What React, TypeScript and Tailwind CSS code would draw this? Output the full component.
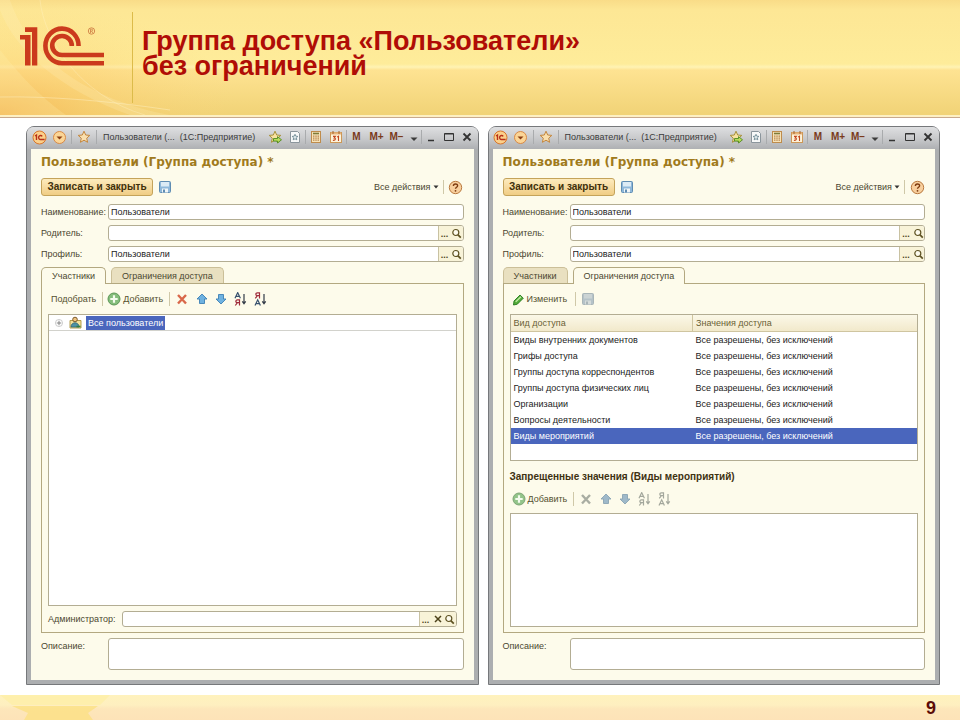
import { useId, useState, type ReactNode } from "react";

const ACCESS_KINDS = [
  "Виды внутренних документов",
  "Грифы доступа",
  "Группы доступа корреспондентов",
  "Группы доступа физических лиц",
  "Организации",
  "Вопросы деятельности",
  "Виды мероприятий",
];

type TabName = "members" | "limits";

/* ---------- icons ---------- */

function OneCBadge() {
  return (
    <svg width="15" height="15" viewBox="0 0 15 15" aria-hidden="true">
      <circle cx="7.5" cy="7.5" r="6.5" fill="#fbd08a" stroke="#d9762b" />
      <path d="M3 6l1.5-1v5M10.2 6.3a2 2 0 1 0-1.6 3.2h4" fill="none" stroke="#b8301a" strokeWidth="1.4" />
    </svg>
  );
}

function ChevronBadge() {
  return (
    <svg width="15" height="15" viewBox="0 0 15 15" aria-hidden="true">
      <circle cx="7.5" cy="7.5" r="6" fill="#fbd596" stroke="#d98a45" />
      <path d="M4.5 6.5h6l-3 3z" fill="#8a3d12" />
    </svg>
  );
}

const STAR = "M7 1.2l1.7 3.8 4.1.4-3.1 2.8.9 4.1L7 10.2l-3.6 2.1.9-4.1L1.2 5.4l4.1-.4z";

function StarIcon() {
  return (
    <svg width="14" height="14" viewBox="0 0 14 14" aria-hidden="true">
      <path d={STAR} fill="#f9dfae" stroke="#c5873d" />
    </svg>
  );
}

function StarArrowIcon() {
  return (
    <svg width="14" height="14" viewBox="0 0 14 14" aria-hidden="true">
      <path d={STAR} fill="#f8e2a0" stroke="#a8913c" />
      <path d="M5.5 8.5h4V6.6l4 3.2-4 3.2v-1.9h-4z" fill="#b9dc5c" stroke="#4e8a1f" strokeWidth=".9" />
    </svg>
  );
}

function DocStarIcon() {
  return (
    <svg width="14" height="14" viewBox="0 0 14 14" aria-hidden="true">
      <path d="M2.5 1.5h7l2 2v9h-9z" fill="#f7f8f8" stroke="#8b959c" />
      <path d="M7 4.3l.9 1.9 2 .2-1.5 1.4.4 2L7 8.8l-1.8 1 .4-2-1.5-1.4 2-.2z" fill="#dfe9ec" stroke="#63808c" strokeWidth=".8" />
    </svg>
  );
}

function CalculatorIcon() {
  return (
    <svg width="14" height="14" viewBox="0 0 14 14" aria-hidden="true">
      <rect x="2.5" y="1.5" width="9" height="11" fill="#f6e3b8" stroke="#bf8c4c" />
      <path d="M4 3.5h6" stroke="#7d7a38" strokeWidth="1.6" />
      <path d="M4.8 5.5v6M7 5.5v6M9.2 5.5v6" stroke="#a5682c" strokeWidth="1.1" strokeDasharray="1.3 .7" />
    </svg>
  );
}

function CalendarIcon() {
  return (
    <svg width="14" height="14" viewBox="0 0 14 14" aria-hidden="true">
      <rect x="1.5" y="2.5" width="11" height="10" fill="#fdf3da" stroke="#cd9858" />
      <path d="M2 3.5h10" stroke="#e8b47c" strokeWidth="2" />
      <path d="M4 1v3M10 1v3" stroke="#a4632c" />
      <path d="M4 6.4h2.4L5.2 8c1.800-.1 1.800 2.600-1.300 2.300M8.200 7l1.300-.8v4.800" fill="none" stroke="#c4471f" strokeWidth="1.1" />
    </svg>
  );
}

function SaveIcon({ muted = false }: { muted?: boolean }) {
  const edge = muted ? "#a9b5b8" : "#5f8cb2";
  const body = muted ? "#b5c2c8" : "#8fb8da";
  return (
    <svg width="14" height="14" viewBox="0 0 14 14" aria-hidden="true">
      <rect x="1.500" y="1.500" width="11" height="11" rx="1" fill={body} stroke={edge} />
      <rect x="3" y="2" width="8" height="4.500" fill={muted ? "#cbd3d4" : "#dcebf5"} />
      <rect x="4" y="8.500" width="6" height="4" fill={muted ? "#d5dbda" : "#f1f6f8"} />
      <rect x="5" y="9.500" width="2" height="3" fill={edge} />
    </svg>
  );
}

function HelpIcon() {
  return (
    <svg width="15" height="15" viewBox="0 0 15 15" aria-hidden="true">
      <circle cx="7.5" cy="7.5" r="6.2" fill="#f8cf9d" stroke="#b9793f" />
      <path d="M5.400 6c0-2.800 4.200-2.600 4.200-.3 0 1.500-2.100 1.500-2.100 3.100" fill="none" stroke="#7d3b10" strokeWidth="1.400" />
      <circle cx="7.500" cy="10.800" r=".9" fill="#7d3b10" />
    </svg>
  );
}

function MagnifierIcon() {
  return (
    <svg width="11" height="11" viewBox="0 0 11 11" aria-hidden="true">
      <circle cx="4.800" cy="4.500" r="3" fill="#fdfbee" stroke="#5e5222" strokeWidth="1.200" />
      <path d="M7 6.800l2.800 2.800" stroke="#5e5222" strokeWidth="1.700" />
    </svg>
  );
}

function PlusIcon({ muted = false }: { muted?: boolean }) {
  return (
    <svg width="14" height="14" viewBox="0 0 14 14" aria-hidden="true">
      <circle cx="7" cy="7" r="6" fill={muted ? "#93c48a" : "#84bd7b"} stroke={muted ? "#7da575" : "#5b9655"} />
      <path d="M7 3.300v7.400M3.300 7h7.400" stroke="#f4fbee" strokeWidth="2.200" />
    </svg>
  );
}

function DeleteIcon({ muted = false }: { muted?: boolean }) {
  return (
    <svg width="12" height="12" viewBox="0 0 12 12" aria-hidden="true">
      <path d="M2 2l8 8.500M10 2L2 10.500" stroke={muted ? "#a9ada2" : "#d9684a"} strokeWidth="2.400" />
    </svg>
  );
}

function ArrowIcon({ down = false, muted = false }: { down?: boolean; muted?: boolean }) {
  return (
    <svg width="12" height="12" viewBox="0 0 12 12" aria-hidden="true" className={down ? "rotate-180" : ""}>
      <path
        d="M6 1l5 5H8.500v4.500h-5V6H1z"
        fill={muted ? "#9fb9c9" : "#6fb2e0"}
        stroke={muted ? "#8aa5b4" : "#3d80b4"}
        strokeWidth=".9"
      />
    </svg>
  );
}

function SortIcon({ reverse = false, muted = false }: { reverse?: boolean; muted?: boolean }) {
  const red = muted ? "#a3a79c" : "#a02c3c";
  const blue = muted ? "#a3a79c" : "#36506e";
  return (
    <svg width="13" height="14" viewBox="0 0 13 14" aria-hidden="true">
      <g fill="none" strokeWidth="1.200">
        <path
          d={reverse ? "M1 13.500L3.700 7.800l2.700 5.700M2 11.700h3.400" : "M1 6.200L3.700.6l2.700 5.600M2 4.400h3.400"}
          stroke={blue}
        />
        <path
          d={reverse ? "M5.500 6.400V.8H3.400c-2.100 0-2.100 2.800 0 2.800h2M3.400 3.600L1.300 6.400" : "M5.500 13.500V7.900H3.400c-2.100 0-2.100 2.800 0 2.800h2M3.400 10.700l-2.100 2.800"}
          stroke={red}
        />
        <path d="M10 2v9.500M8.300 9.300l1.700 2.500 1.700-2.500" stroke={muted ? "#a3a79c" : "#333b48"} />
      </g>
    </svg>
  );
}

function PencilIcon() {
  return (
    <svg width="13" height="13" viewBox="0 0 13 13" aria-hidden="true">
      <path d="M2 8l6-6 3.300 3.200-6 6L1.500 12z" fill="#55ad3a" stroke="#24781d" strokeWidth=".9" />
      <path d="M3.700 8.900L8.900 3.800" stroke="#c9efae" strokeWidth="1.200" />
    </svg>
  );
}

function GroupIcon() {
  return (
    <svg width="13" height="13" viewBox="0 0 13 13" aria-hidden="true">
      <path d="M1 4.500h11v7.500H1z" fill="#f4e29c" stroke="#ab9340" strokeWidth=".9" />
      <circle cx="6" cy="3.500" r="2.300" fill="#eec27e" stroke="#7c5b2a" />
      <path d="M2 11c0-5.600 8-5.600 8 0z" fill="#4f93a6" stroke="#2c6474" strokeWidth=".8" />
      <path d="M7.500 10.500h4" stroke="#2f7d43" strokeWidth="1.600" />
    </svg>
  );
}

function Logo() {
  return (
    <svg width="88" height="44" viewBox="18 24 88 44" role="img" aria-label="1С">
      <g fill="#cb3a1d">
        <path d="M20 35h10.500v30.500H25V39.500h-5z" />
        <path d="M25 27.300h12.300v38.200H32V32h-7z" />
      </g>
      <g fill="none" stroke="#cb3a1d" strokeWidth="4.600">
        <path d="M78.600 46A16.600 17.300 0 1 0 62 63.200H104" />
        <path d="M71.800 46A9.800 9.500 0 1 0 62 55H104" />
      </g>
      <circle cx="91.500" cy="31" r="3.200" fill="none" stroke="#c9713a" strokeWidth=".8" />
      <path d="M90.500 33v-3.700h1.300c1.200 0 1.200 1.800 0 1.800h-1.200M91.700 31.200l1 1.800" fill="none" stroke="#c9713a" strokeWidth=".7" />
    </svg>
  );
}

function HeaderBackdrop() {
  return (
    <svg
      className="absolute inset-y-0 left-0 h-full w-[240px]"
      viewBox="0 0 240 115"
      preserveAspectRatio="none"
      aria-hidden="true"
    >
      <defs>
        <radialGradient id="glow" cx="0" cy="1" r="1">
          <stop offset="0" stopColor="#f6a63c" stopOpacity=".6" />
          <stop offset=".4" stopColor="#fbc460" stopOpacity=".4" />
          <stop offset="1" stopColor="#fbd67c" stopOpacity="0" />
        </radialGradient>
      </defs>
      <rect width="240" height="115" fill="url(#glow)" />
      <path d="M10 0C30 60 90 100 170 115H130C60 90 15 50 0 10V0z" fill="#fff3bd" opacity=".22" />
      <path d="M40 0C44 40 80 96 145 115" fill="none" stroke="#fff6cf" strokeOpacity=".3" />
      <path d="M0 50C25 82 45 100 66 115H0z" fill="#fff0b0" opacity=".22" />
      <path d="M0 97C50 96 110 101 170 110" fill="none" stroke="#fff6cf" strokeOpacity=".4" />
    </svg>
  );
}

/* ---------- small controls ---------- */

function IconButton({ label, className, children }: { label: string; className: string; children: ReactNode }) {
  return (
    <button type="button" aria-label={label} className={`flex shrink-0 items-center justify-center ${className}`}>
      {children}
    </button>
  );
}

function Separator({ className = "bg-[#cfc8a8]" }: { className?: string }) {
  return <span className={`h-3.5 w-px shrink-0 ${className}`} />;
}

function TitleBar() {
  return (
    <div className="flex h-[22px] shrink-0 items-center rounded-t-md bg-linear-to-b from-[#dedfe1] via-[#c9cacc] to-[#aeb0b3] px-0.5 pb-0.5 text-[#3b3b3b]">
      <IconButton label="Меню" className="w-5"><OneCBadge /></IconButton>
      <IconButton label="Команды" className="w-5"><ChevronBadge /></IconButton>
      <Separator className="mr-1 ml-0.5 bg-[#a9abad]" />
      <IconButton label="Избранное" className="w-4"><StarIcon /></IconButton>
      <Separator className="mx-1 bg-[#a9abad]" />
      <span className="min-w-0 flex-1 truncate pl-0.5 whitespace-pre">Пользователи (...  (1С:Предприятие)</span>
      <IconButton label="Добавить в избранное" className="w-5"><StarArrowIcon /></IconButton>
      <IconButton label="Ссылка" className="w-5"><DocStarIcon /></IconButton>
      <Separator className="bg-[#a9abad]" />
      <IconButton label="Калькулятор" className="w-5"><CalculatorIcon /></IconButton>
      <IconButton label="Календарь" className="w-5"><CalendarIcon /></IconButton>
      <Separator className="bg-[#a9abad]" />
      <button type="button" className="w-5 shrink-0 text-[10px] font-bold text-[#7a3a1c]">M</button>
      <button type="button" className="w-5 shrink-0 text-[10px] font-bold text-[#7a3a1c]">M+</button>
      <button type="button" className="w-5 shrink-0 text-[10px] font-bold text-[#7a3a1c]">M−</button>
      <IconButton label="Ещё" className="w-3.5">
        <svg width="8" height="10" viewBox="0 0 8 10" aria-hidden="true">
          <path d="M.5 5.500h7L4 9z" fill="#3b3b3b" />
        </svg>
      </IconButton>
      <Separator className="bg-[#a9abad]" />
      <IconButton label="Свернуть" className="w-[18px]">
        <svg width="10" height="10" viewBox="0 0 10 10" aria-hidden="true"><path d="M2 8.500h6" stroke="#333" strokeWidth="1.500" /></svg>
      </IconButton>
      <IconButton label="Развернуть" className="w-[18px]">
        <svg width="10" height="10" viewBox="0 0 10 10" aria-hidden="true"><path d="M.5 1.500h9v7h-9zM.5 2h9" fill="none" stroke="#333" /></svg>
      </IconButton>
      <IconButton label="Закрыть" className="w-[18px]">
        <svg width="10" height="10" viewBox="0 0 10 10" aria-hidden="true"><path d="M1.500 1.500l7 7M8.500 1.500l-7 7" stroke="#333" strokeWidth="1.800" /></svg>
      </IconButton>
    </div>
  );
}

function LookupField({ id, value = "", clearable = false, buttons = true }: { id: string; value?: string; clearable?: boolean; buttons?: boolean }) {
  return (
    <div className="flex h-4 min-w-0 flex-1 overflow-hidden rounded-[3px] border border-[#b3ad93] bg-white">
      <input id={id} defaultValue={value} className="min-w-0 flex-1 bg-transparent px-0.5 text-[#222] outline-none" />
      {buttons && (
        <div className="flex shrink-0 border-l border-[#c9c2a2] bg-[#f8f3d8] text-[#4c421a]">
          <button type="button" aria-label="Выбрать" className="w-3 text-center font-bold">...</button>
          {clearable && (
            <IconButton label="Очистить" className="w-3">
              <svg width="8" height="8" viewBox="0 0 8 8" aria-hidden="true"><path d="M1 1l6 6M7 1L1 7" stroke="#4c421a" strokeWidth="1.500" /></svg>
            </IconButton>
          )}
          <IconButton label="Открыть" className="w-3"><MagnifierIcon /></IconButton>
        </div>
      )}
    </div>
  );
}

function Field({ label, value, buttons = true }: { label: string; value?: string; buttons?: boolean }) {
  const id = useId();
  return (
    <div className="flex items-center">
      <label htmlFor={id} className="w-[67px] shrink-0 whitespace-nowrap">{label}</label>
      <LookupField id={id} value={value} buttons={buttons} />
    </div>
  );
}

function Tab({ active, onClick, children }: { active: boolean; onClick: () => void; children: ReactNode }) {
  return (
    <button
      type="button"
      role="tab"
      aria-selected={active}
      onClick={onClick}
      className={`h-4 rounded-t-[5px] border border-b-0 px-2.5 ${
        active ? "relative border-[#b3a880] bg-[#fdfbeb] after:absolute after:inset-x-0 after:-bottom-px after:h-px after:bg-[#fdfbeb]" : "border-[#cbbf98] bg-[#e9e0c0]"
      }`}
    >
      {children}
    </button>
  );
}

function ListCommands({ muted = false }: { muted?: boolean }) {
  return (
    <>
      <button type="button" className="flex items-center gap-0.5 text-[#55512f]"><PlusIcon muted={muted} />Добавить</button>
      <Separator className="mr-0.5 ml-1.5 bg-[#cfc8a8]" />
      <IconButton label="Удалить" className="w-5"><DeleteIcon muted={muted} /></IconButton>
      <IconButton label="Вверх" className="w-[19px]"><ArrowIcon muted={muted} /></IconButton>
      <IconButton label="Вниз" className="w-[19px]"><ArrowIcon down muted={muted} /></IconButton>
      <IconButton label="По возрастанию" className="w-5"><SortIcon muted={muted} /></IconButton>
      <IconButton label="По убыванию" className="w-5"><SortIcon reverse muted={muted} /></IconButton>
    </>
  );
}

/* ---------- tab pages ---------- */

function MembersPage() {
  const adminId = useId();
  return (
    <>
      <div className="flex h-[30px] shrink-0 items-center pl-[3px]">
        <button type="button" className="text-[#55512f]">Подобрать</button>
        <Separator className="mr-1 ml-1.5 bg-[#cfc8a8]" />
        <ListCommands />
      </div>
      <div role="tree" aria-label="Участники" className="flex-1 border border-[#b3ad93] bg-white">
        <div role="treeitem" aria-selected="true" className="flex h-4 items-center border-b border-[#d2d2cc] pl-1.5">
          <svg width="8" height="8" viewBox="0 0 9 9" aria-hidden="true">
            <circle cx="4.500" cy="4.500" r="4" fill="none" stroke="#b9b9b9" strokeWidth=".8" />
            <path d="M4.500 2v5M2 4.500h5" stroke="#777" />
          </svg>
          <span className="mr-1 ml-1.5"><GroupIcon /></span>
          <span className="bg-[#4a66bd] px-0.5 leading-[14px] text-white">Все пользователи</span>
        </div>
      </div>
      <div className="mt-[5px] flex shrink-0 items-center">
        <label htmlFor={adminId} className="w-[74px] shrink-0">Администратор:</label>
        <LookupField id={adminId} clearable />
      </div>
    </>
  );
}

function LimitsPage() {
  const last = ACCESS_KINDS.length - 1;
  return (
    <>
      <div className="flex h-[30px] shrink-0 items-center pl-0.5">
        <button type="button" className="flex items-center gap-0.5 text-[#55512f]"><PencilIcon />Изменить</button>
        <Separator className="mr-0.5 ml-2 bg-[#cfc8a8]" />
        <IconButton label="Сохранить" className="w-5"><SaveIcon muted /></IconButton>
      </div>
      <div className="h-[147px] shrink-0 border border-[#b3ad93] bg-white">
        <table className="w-full table-fixed border-collapse text-left text-[#222]">
          <thead>
            <tr className="h-4 border-b border-[#cfc5a0] bg-linear-to-b from-[#fbf8e8] to-[#f2e9cb] text-[#6a6136]">
              <th className="w-[182px] border-r border-[#cfc5a0] p-0 pl-[3px] font-normal">Вид доступа</th>
              <th className="p-0 pl-[3px] font-normal">Значения доступа</th>
            </tr>
          </thead>
          <tbody>
            {ACCESS_KINDS.map((kind, i) => (
              <tr key={kind} className={`h-4 ${i === last ? "bg-[#4a66bd] text-white" : ""}`}>
                <td className="p-0 pl-[3px]">{kind}</td>
                <td className="p-0 pl-[3px]">Все разрешены, без исключений</td>
              </tr>
            ))}
          </tbody>
        </table>
      </div>
      <h3 className="mt-2 h-4 shrink-0 text-[10px] font-bold text-[#3f3212]">Запрещенные значения (Виды мероприятий)</h3>
      <div className="flex h-7 shrink-0 items-center pl-0.5"><ListCommands muted /></div>
      <div role="listbox" aria-label="Запрещенные значения" className="flex-1 border border-[#b3ad93] bg-white" />
    </>
  );
}

/* ---------- window ---------- */

function AccessGroupWindow({ initialTab }: { initialTab: TabName }) {
  const [tab, setTab] = useState<TabName>(initialTab);
  const noteId = useId();
  return (
    <section className="flex min-w-0 flex-1 flex-col rounded-t-lg border border-[#76787b] bg-[#acaeb0] text-[9px] leading-4 text-[#4b4730]">
      <TitleBar />
      <div className="mx-1 mb-1 flex flex-1 flex-col bg-[#fdfbeb] px-2.5 pb-2.5">
        <h2 className="mt-[3px] h-5 font-['DejaVu_Sans',sans-serif] text-[12px] leading-5 font-bold whitespace-nowrap text-[#a07a1c]">
          Пользователи (Группа доступа) *
        </h2>
        <div className="mt-1.5 flex h-[18px] items-center">
          <button type="button" className="h-[18px] w-28 rounded-[3px] border border-[#c4a35a] bg-linear-to-b from-[#fdebbd] to-[#f0cd85] text-[10px] font-bold text-[#40300c]">
            Записать и закрыть
          </button>
          <IconButton label="Сохранить" className="ml-1 w-4"><SaveIcon /></IconButton>
          <button type="button" className="ml-auto flex items-center gap-0.5">
            Все действия
            <svg width="6" height="4" viewBox="0 0 6 4" aria-hidden="true"><path d="M.5.5h5L3 3.500z" fill="#333" /></svg>
          </button>
          <Separator className="mx-1 bg-[#cfc8a8]" />
          <IconButton label="Справка" className="w-4"><HelpIcon /></IconButton>
        </div>
        <div className="mt-2 flex flex-col gap-[5px]">
          <Field label="Наименование:" value="Пользователи" buttons={false} />
          <Field label="Родитель:" />
          <Field label="Профиль:" value="Пользователи" />
        </div>
        <div role="tablist" className="mt-[5px] flex gap-[5px]">
          <Tab active={tab === "members"} onClick={() => setTab("members")}>Участники</Tab>
          <Tab active={tab === "limits"} onClick={() => setTab("limits")}>Ограничения доступа</Tab>
        </div>
        <div role="tabpanel" className="flex flex-1 flex-col border border-[#b3a880] px-1.5 pb-[5px]">
          {tab === "members" ? <MembersPage /> : <LimitsPage />}
        </div>
        <div className="mt-[5px] flex">
          <label htmlFor={noteId} className="w-[67px] shrink-0">Описание:</label>
          <textarea id={noteId} className="h-8 min-w-0 flex-1 resize-none rounded-[3px] border border-[#b3ad93] bg-white outline-none" />
        </div>
      </div>
    </section>
  );
}

export default function App() {
  return (
    <div className="flex min-h-screen flex-col bg-white font-['Liberation_Sans',Arial,sans-serif]">
      <header className="relative flex h-[118px] shrink-0 flex-col">
        <div className="relative flex flex-1 items-start bg-[linear-gradient(to_bottom,#f9dc88_0px,#fde795_10px,#feec9a_64px,#fff3b4_67px,#fee392_70px,#f1d377_114px)]">
          <HeaderBackdrop />
          <div className="relative w-[132px] shrink-0 pt-6 pl-[18px]"><Logo /></div>
          <div className="relative mt-3 h-[91px] w-px bg-[#dcbb4a]" />
          <h1 className="relative mt-[29px] ml-[9px] text-[27px] leading-[25px] font-bold text-[#b00d06]">
            Группа доступа «Пользователи»
            <br />
            без ограничений
          </h1>
        </div>
        <div className="h-[3px] border-b border-[#c9a98c] bg-[#fdf0c4]" />
      </header>
      <main className="flex flex-1 gap-[9px] pt-2 pr-5 pb-2.5 pl-[26px]">
        <AccessGroupWindow initialTab="members" />
        <AccessGroupWindow initialTab="limits" />
      </main>
      <footer className="flex h-[25px] shrink-0 items-center justify-between bg-[linear-gradient(to_bottom,#fff2bd_0px,#feefc0_10px,#fde6ba_14px,#fde3b8_25px)] pr-6">
        <svg width="120" height="25" viewBox="0 0 120 25" aria-hidden="true">
          <path d="M0 0h110l-10 10H12z" fill="#fdeea0" opacity=".6" />
          <path d="M12 11h86L88 18l5 7H24l4-7z" fill="#fbe07c" opacity=".7" />
        </svg>
        <span className="text-lg font-bold text-[#5c0c08]">9</span>
      </footer>
    </div>
  );
}
